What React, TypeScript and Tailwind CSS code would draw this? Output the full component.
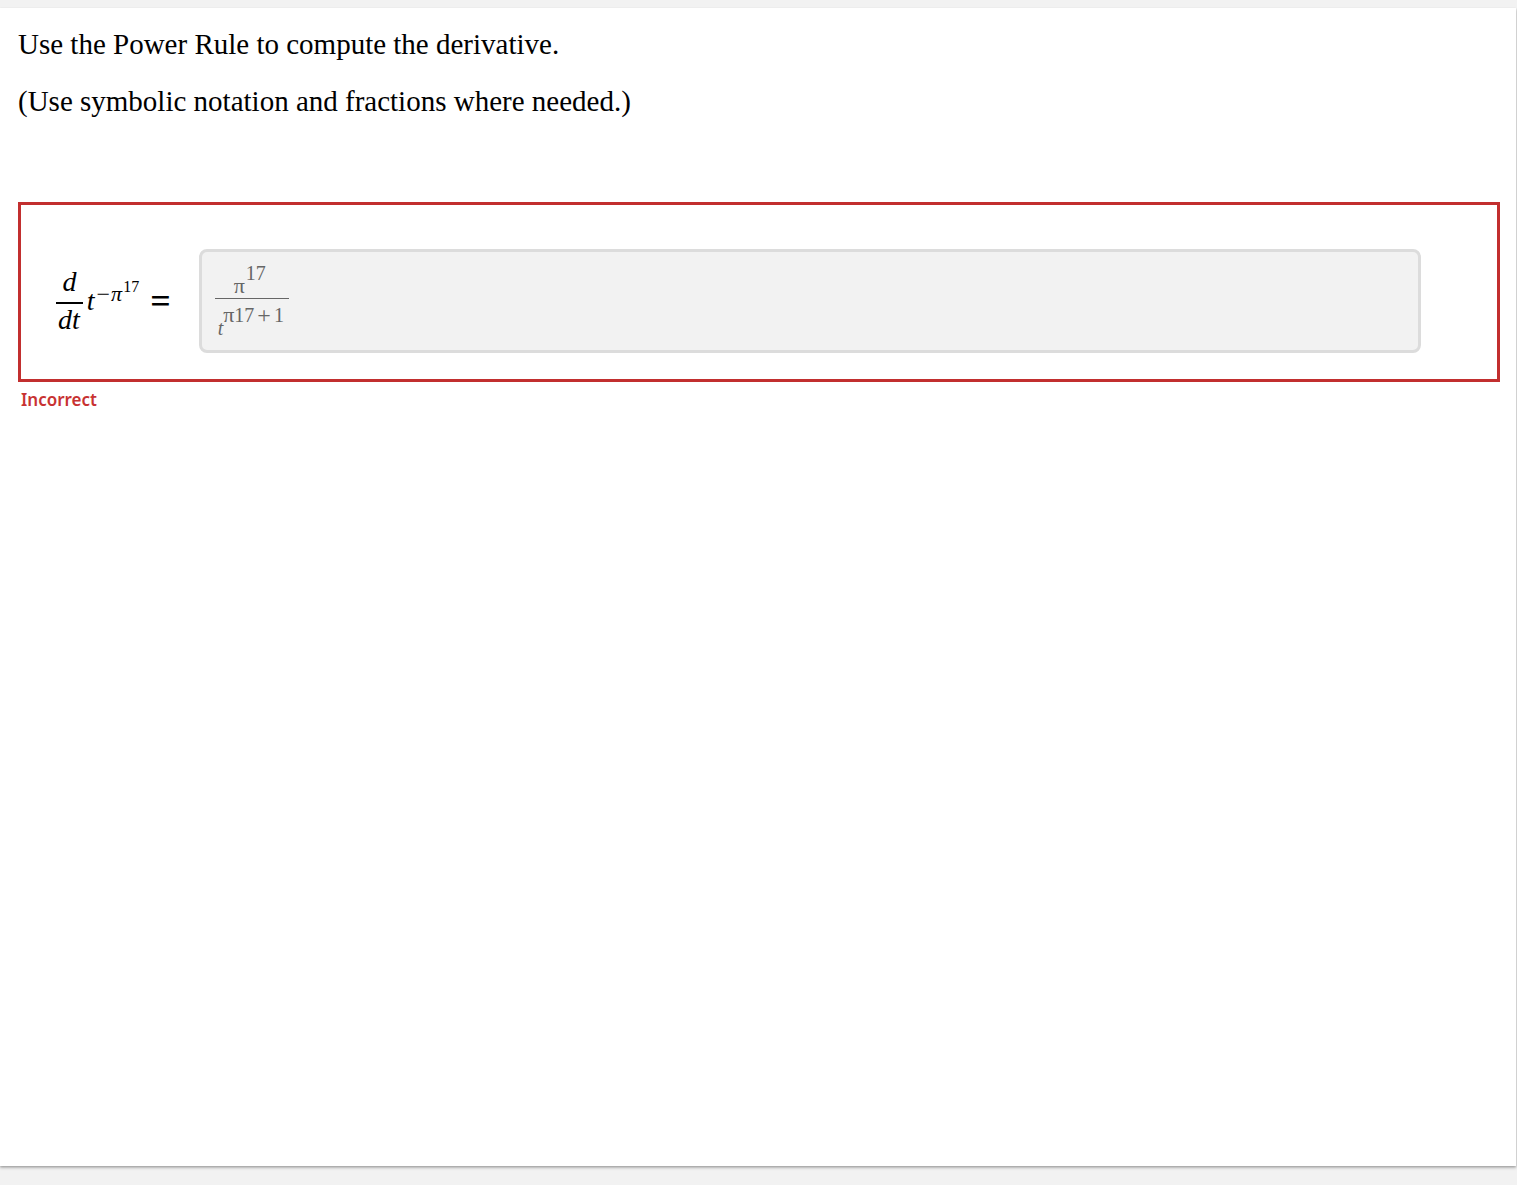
import React from 'react'

type FractionProps = {
  top: React.ReactNode
  bottom: React.ReactNode
  barClass: string
}

function Fraction({ top, bottom, barClass }: FractionProps) {
  return (
    <span className="inline-flex flex-col items-center">
      {top}
      <span className={`self-stretch ${barClass}`} />
      {bottom}
    </span>
  )
}

// d/dt t^(-π^17) =
function Question() {
  return (
    <div id="question" className="flex shrink-0 items-center text-[28px] leading-7 text-black">
      <Fraction
        top={<i>d</i>}
        bottom={<i className="pr-[3px] pl-[2px]">dt</i>}
        barClass="mt-[6px] mb-[2px] h-[2px] bg-black"
      />
      <span className="ml-1 flex items-end pb-2">
        <i>t</i>
        <span className="ml-[2px] flex items-center gap-px pb-[11px] leading-5">
          <span className="text-2xl leading-5">−</span>
          <i className="text-[22px] leading-5">π</i>
        </span>
        <span className="ml-px pb-5 text-base leading-4">17</span>
      </span>
      <span className="ml-[11px] text-[36px] font-bold">=</span>
    </div>
  )
}

// Submitted answer, locked after grading
function Answer() {
  return (
    <div
      role="textbox"
      aria-labelledby="question"
      aria-readonly="true"
      className="flex-1 rounded-lg border-3 border-[#dcdcdc] bg-[#f2f2f2] px-[13px] pt-[11px] pb-3 text-xl leading-5 text-[#666]"
    >
      <div className="flex">
        <Fraction
          top={
            <span className="flex items-end gap-px pr-1">
              <span className="text-[22px] leading-5">π</span>
              <span className="pb-[13px]">17</span>
            </span>
          }
          bottom={
            <span className="flex items-end pr-[5px] pl-[3px]">
              <i>t</i>
              <span className="flex pb-[13px]">
                <span className="text-[22px] leading-5">π</span>
                <span>17</span>
                <span className="mx-[3px] text-2xl leading-5">+</span>
                <span>1</span>
              </span>
            </span>
          }
          barClass="mt-[2px] mb-[6px] h-px bg-[#666]"
        />
      </div>
    </div>
  )
}

export default function App() {
  return (
    <div className="flex min-h-screen flex-col bg-[#f2f2f2] pt-2 pr-px pb-[19px] font-['Liberation_Serif',serif]">
      <main className="flex-1 bg-white pt-5 pr-4 pl-[18px] shadow-[0_2px_3px_rgba(0,0,0,0.2),0_1px_2px_rgba(0,0,0,0.2)]">
        <div className="text-[29px] leading-8 text-black">
          <p>Use the Power Rule to compute the derivative.</p>
          <p className="mt-[25px]">(Use symbolic notation and fractions where needed.)</p>
        </div>

        <div className="mt-[85px] flex items-center gap-7 border-3 border-[#c22f2f] pt-11 pr-[76px] pb-[26px] pl-[35px]">
          <Question />
          <Answer />
        </div>
        <p className="mt-[6px] pl-[3px] font-['Noto_Sans',sans-serif] text-[17px] leading-6 font-semibold text-[#c83232]">
          Incorrect
        </p>
      </main>
    </div>
  )
}
